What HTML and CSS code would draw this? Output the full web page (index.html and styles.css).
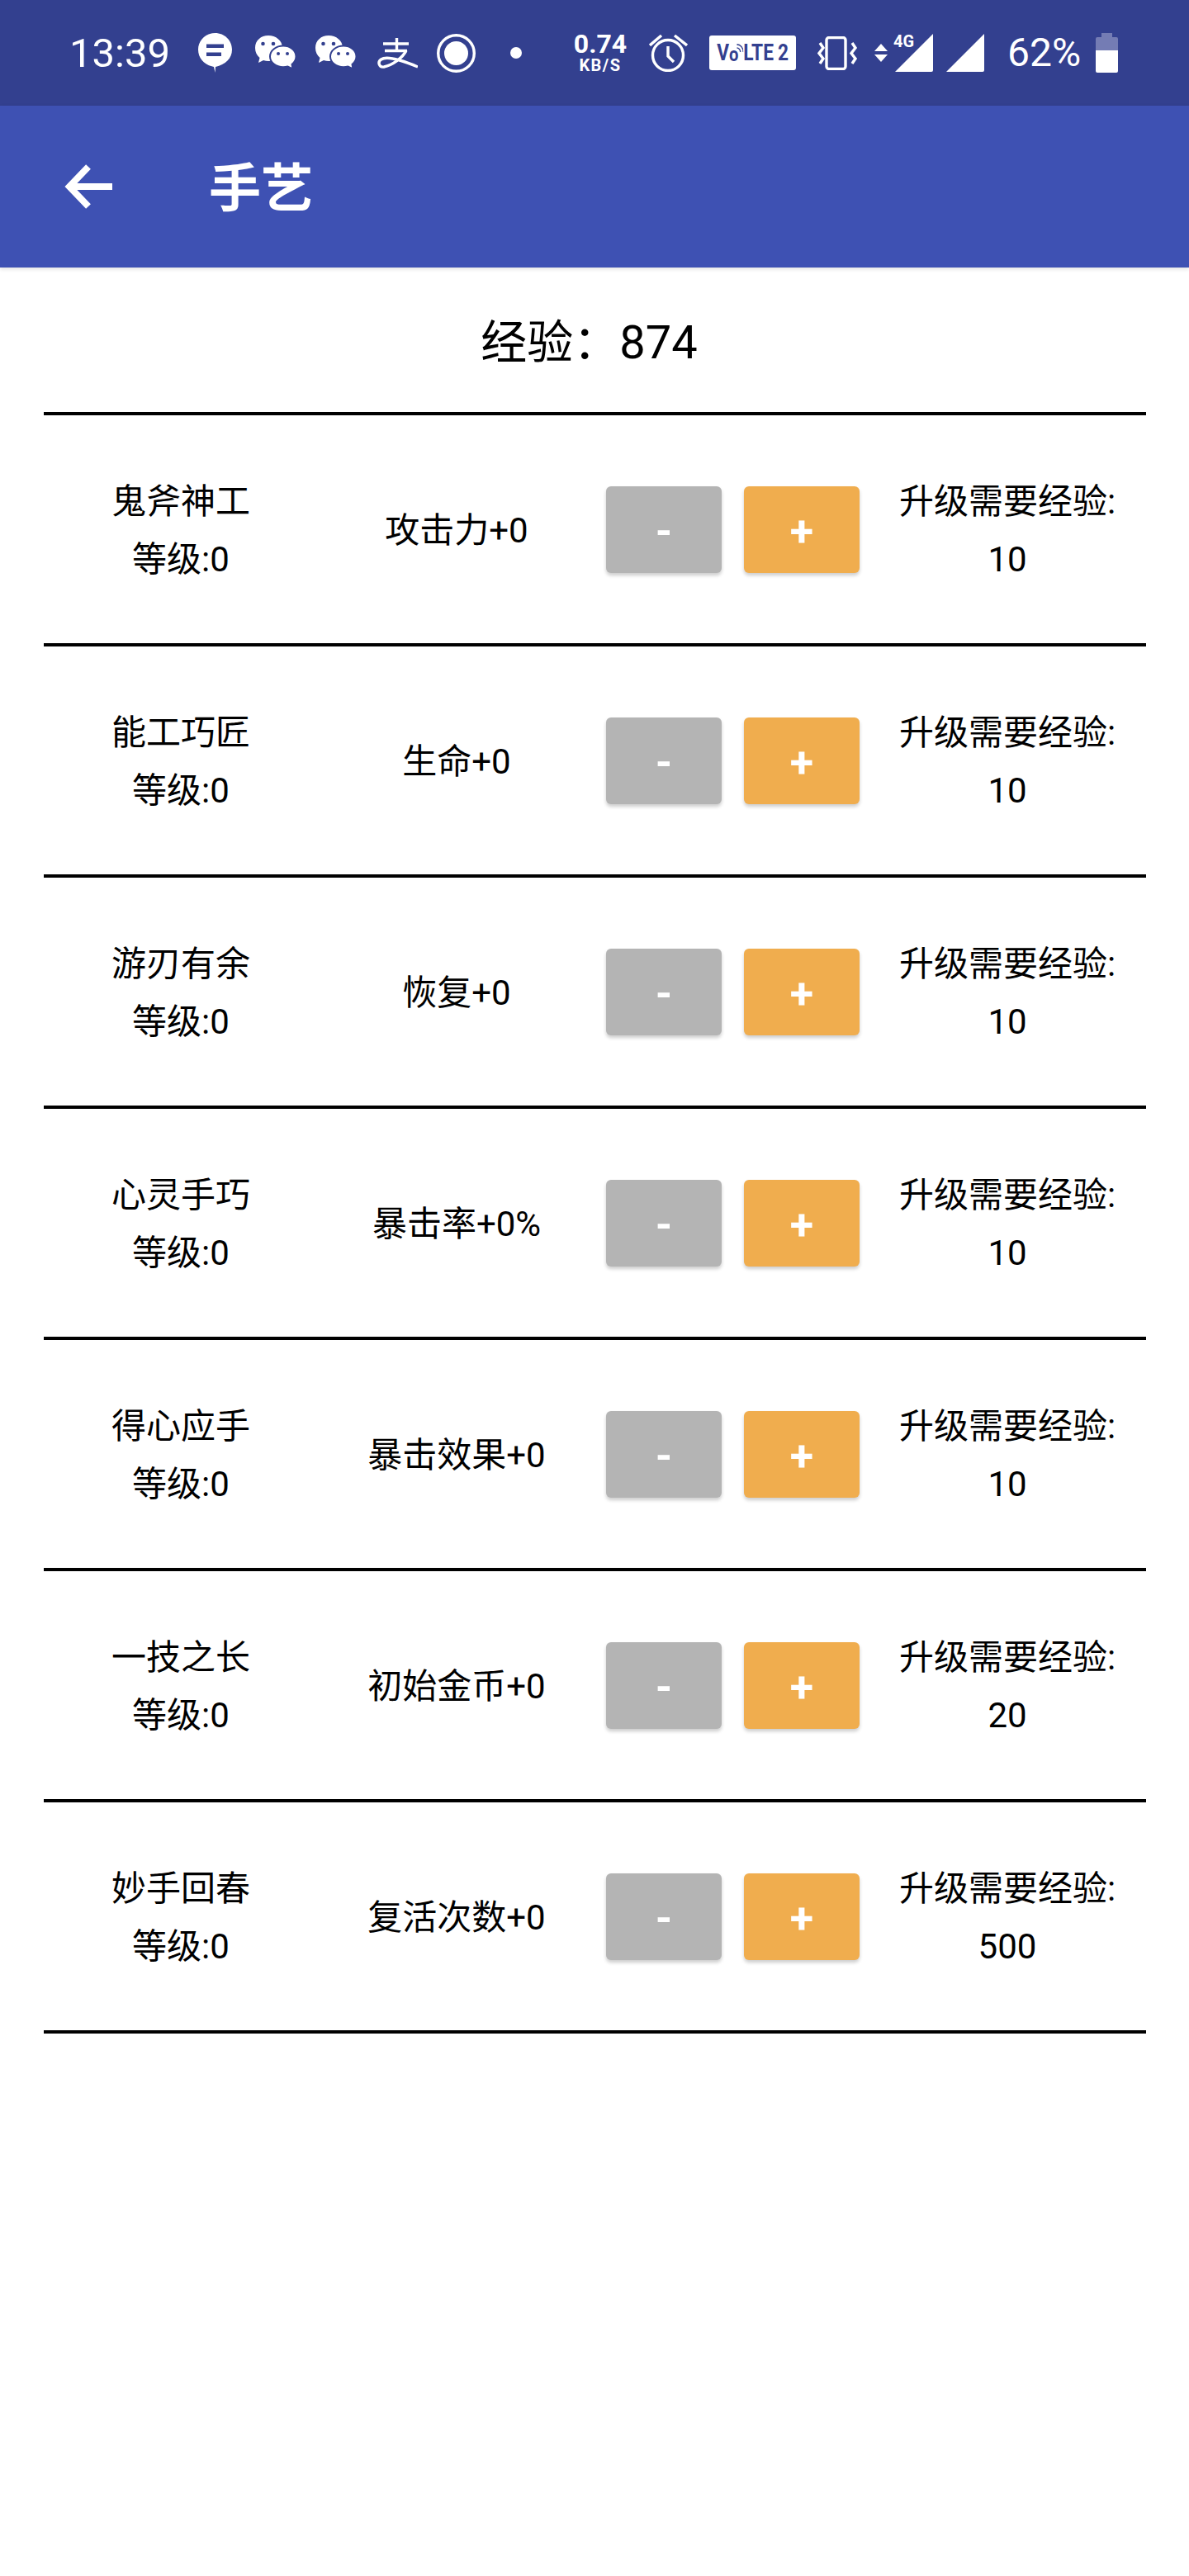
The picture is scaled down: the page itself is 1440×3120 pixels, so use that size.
FILE: index.html
```html
<!DOCTYPE html>
<html lang="zh-CN">
<head>
<meta charset="utf-8">
<title>手艺</title>
<link rel="stylesheet" href="styles.css">
</head>
<body>
<svg class="defs" width="0" height="0" aria-hidden="true">
  <symbol id="wechat" viewBox="0 0 49 42">
    <path class="fill-w" d="M16 0C25 0 33 6 33 15C33 24 25 31 16 31C14 31 12 30.600 10 30L4 33L5.500 27C2 24 0 20 0 15C0 6 7 0 16 0Z"/>
    <circle class="fill-b" cx="9.500" cy="10" r="2.300"/>
    <circle class="fill-b" cx="22" cy="10" r="2.300"/>
    <path class="bubble" d="M34 12.500C42.500 12.500 49.500 18 49.500 25.500C49.500 29.500 47.500 32.500 44.500 35L45.500 40.500L39.500 37.500C37.800 38 36 38.300 34 38.300C25.500 38.300 18 32.800 18 25.500C18 18 25.500 12.500 34 12.500Z"/>
    <circle class="fill-b" cx="28" cy="22" r="2"/>
    <circle class="fill-b" cx="39" cy="22" r="2"/>
  </symbol>
</svg>

<header class="status">
  <span class="clock">13:39</span>
  <svg class="ic msg" viewBox="0 0 41 48"><path class="fill-w" d="M20.500 0C32 0 41 9 41 20C41 31 33 38 21 41L20.500 48L19 41C8 39 0 31 0 20C0 9 9 0 20.500 0Z"/><rect class="fill-b" x="10" y="13.500" width="21" height="4.500"/><rect class="fill-b" x="10" y="23.500" width="18" height="4.500"/></svg>
  <svg class="ic wx wx1"><use href="#wechat"/></svg>
  <svg class="ic wx wx2"><use href="#wechat"/></svg>
  <svg class="ic ali" viewBox="0 0 49 37"><path class="ln" d="M7 7H38M23.500 0V15M9 15.500H36"/><path class="ln" d="M35 15C31 24 18 33 8 35C2 36 0 29 4.500 26C11 21.500 30 27 49 35"/></svg>
  <svg class="ic rec" viewBox="0 0 47 47"><circle class="ln" cx="23.500" cy="23.500" r="21.800"/><circle class="fill-w" cx="23.500" cy="23.500" r="14.500"/></svg>
  <span class="dot"></span>
  <span class="speed"><b class="speed-v">0.74</b><b class="speed-u">KB/S</b></span>
  <svg class="ic alarm" viewBox="0 0 47 45"><circle class="ln" cx="23" cy="25" r="18.500"/><path class="ln" d="M23 14V26L30 33M1 13L15 1M31 1L46 13"/></svg>
  <span class="volte"><span class="volte-in">V<span class="volte-o">o</span><svg class="wifi" viewBox="0 0 12 12"><path d="M1 6A6 6 0 0 1 7 12M1 1A11 11 0 0 1 12 12"/></svg>LTE<span class="volte-2">2</span></span></span>
  <svg class="ic vib" viewBox="0 0 50 41"><rect class="ln" x="11" y="1.500" width="23" height="38" rx="3"/><path class="ln" d="M3 8L7 14L2 20.500L7 27L3 33M42 8L46 14L41 20.500L46 27L42 33"/></svg>
  <svg class="ic arrows" viewBox="0 0 16 22"><path class="fill-w" d="M8 0L16 9H0ZM0 13H16L8 22Z"/></svg>
  <span class="sig-wrap"><svg class="ic sig" viewBox="0 0 46 46"><path class="fill-w" d="M46 0V44Q46 46 44 46H0Z"/></svg><b class="net">4G</b></span>
  <svg class="ic sig sig2" viewBox="0 0 46 46"><path class="fill-w" d="M46 0V44Q46 46 44 46H0Z"/></svg>
  <span class="pct">62%</span>
  <svg class="ic bat" viewBox="0 0 27 48"><path class="fill-d" d="M7 0H20V5H25Q27 5 27 7V21H0V7Q0 5 2 5H7Z"/><path class="fill-w" d="M0 21H27V46Q27 48 25 48H2Q0 48 0 46Z"/></svg>
</header>

<div class="appbar">
  <svg class="back" viewBox="0 0 58 54"><path d="M4 27H58M29 3L6 27L29 51"/></svg>
  <h1 class="title">手艺</h1>
</div>

<main class="content">
  <div class="exp">经验：874</div>

  <section class="row">
    <div class="name">鬼斧神工<br>等级:0</div>
    <div class="effect">攻击力+0</div>
    <button class="btn minus">-</button>
    <button class="btn plus">+</button>
    <div class="need">升级需要经验:<br>10</div>
  </section>
  <section class="row">
    <div class="name">能工巧匠<br>等级:0</div>
    <div class="effect">生命+0</div>
    <button class="btn minus">-</button>
    <button class="btn plus">+</button>
    <div class="need">升级需要经验:<br>10</div>
  </section>
  <section class="row">
    <div class="name">游刃有余<br>等级:0</div>
    <div class="effect">恢复+0</div>
    <button class="btn minus">-</button>
    <button class="btn plus">+</button>
    <div class="need">升级需要经验:<br>10</div>
  </section>
  <section class="row">
    <div class="name">心灵手巧<br>等级:0</div>
    <div class="effect">暴击率+0%</div>
    <button class="btn minus">-</button>
    <button class="btn plus">+</button>
    <div class="need">升级需要经验:<br>10</div>
  </section>
  <section class="row">
    <div class="name">得心应手<br>等级:0</div>
    <div class="effect">暴击效果+0</div>
    <button class="btn minus">-</button>
    <button class="btn plus">+</button>
    <div class="need">升级需要经验:<br>10</div>
  </section>
  <section class="row">
    <div class="name">一技之长<br>等级:0</div>
    <div class="effect">初始金币+0</div>
    <button class="btn minus">-</button>
    <button class="btn plus">+</button>
    <div class="need">升级需要经验:<br>20</div>
  </section>
  <section class="row">
    <div class="name">妙手回春<br>等级:0</div>
    <div class="effect">复活次数+0</div>
    <button class="btn minus">-</button>
    <button class="btn plus">+</button>
    <div class="need">升级需要经验:<br>500</div>
  </section>
</main>
</body>
</html>
```

FILE: styles.css
```css
* { box-sizing: border-box; }
html, body { margin: 0; padding: 0; background: #fff; }
body {
  width: 1440px;
  min-height: 3120px;
  font-family: Roboto, "Noto Sans CJK SC", sans-serif;
  color: #000;
}
.defs { position: absolute; }

.fill-w { fill: #fff; }
.fill-b { fill: #33408f; }
.fill-d { fill: #747cb4; }
.ln { fill: none; stroke: #fff; stroke-width: 3.4; }
.bubble { fill: #fff; stroke: #33408f; stroke-width: 2; }

.status {
  height: 128px;
  background: #33408f;
  display: flex;
  align-items: center;
  color: #fff;
  padding-left: 84px;
}
.ic { display: block; flex: none; }
.clock { width: 122px; margin-right: 34px; font-size: 49px; font-weight: 400; line-height: 1; flex: none; white-space: nowrap; }
.msg { width: 41px; height: 48px; margin-right: 28px; }
.wx { width: 49px; height: 42px; }
.wx1 { margin-right: 24px; }
.wx2 { margin-right: 26px; }
.ali { width: 49px; height: 37px; margin-right: 23px; }
.rec { width: 47px; height: 47px; margin-right: 42px; }
.dot { width: 14px; height: 14px; border-radius: 50%; background: #fff; margin-right: 63px; flex: none; }
.speed { width: 64px; margin-right: 27px; padding-bottom: 3px; display: flex; flex-direction: column; align-items: center; flex: none; }
.speed-v { font-size: 32px; line-height: 32px; font-weight: 700; }
.speed-u { font-size: 20px; line-height: 20px; font-weight: 700; letter-spacing: 1.5px; }
.alarm { width: 47px; height: 45px; margin-right: 26px; }
.volte {
  width: 105px;
  height: 42px;
  margin-right: 26px;
  background: #fff;
  border-radius: 3px;
  color: #33408f;
  display: flex;
  align-items: center;
  justify-content: center;
  flex: none;
}
.volte-in {
  display: flex;
  align-items: center;
  flex: none;
  font-size: 27px;
  font-weight: 700;
  line-height: 1;
  transform: scaleX(.84);
}
.volte-o { font-size: 24px; margin-top: 3px; }
.wifi { width: 10px; height: 10px; margin: -12px 0 0 -3px; fill: none; stroke: #33408f; stroke-width: 2; flex: none; }
.volte-2 { margin-left: 6px; }
.vib { width: 50px; height: 41px; margin-right: 19px; }
.arrows { width: 16px; height: 22px; margin-right: 9px; }
.sig-wrap { position: relative; width: 46px; height: 46px; margin-right: 16px; flex: none; }
.sig { width: 46px; height: 46px; }
.net { position: absolute; left: -2px; top: 0; font-size: 20px; line-height: 18px; font-weight: 700; }
.sig2 { margin-right: 28px; }
.pct { width: 90px; margin-right: 17px; font-size: 48px; font-weight: 400; line-height: 1; flex: none; white-space: nowrap; }
.bat { width: 27px; height: 48px; }

.appbar {
  height: 196px;
  background: #3e51b3;
  display: flex;
  align-items: center;
  box-shadow: 0 2px 5px rgba(0, 0, 0, .12);
  position: relative;
  color: #fff;
  padding-left: 78px;
}
.back { width: 58px; height: 54px; fill: none; stroke: #fff; stroke-width: 8; margin-right: 117px; flex: none; }
.title { margin: 0; padding-top: 4px; font-size: 63px; font-weight: 700; line-height: 1; }

.content { padding: 0 52px 0 53px; }
.exp {
  height: 179px;
  border-bottom: 4px solid #000;
  display: flex;
  align-items: center;
  justify-content: center;
  font-size: 56px;
  padding-bottom: 4px;
  padding-right: 14px;
}
.row {
  height: 280px;
  border-bottom: 4px solid #000;
  display: flex;
  align-items: center;
  font-size: 42px;
  line-height: 70px;
  text-align: center;
}
.name { width: 332px; padding-top: 4px; flex: none; }
.effect { width: 336px; padding-top: 4px; flex: none; margin-right: 13px; }
.need { width: 332px; padding-top: 4px; flex: none; margin-left: 13px; }
.btn {
  width: 140px;
  height: 105px;
  border: 0;
  border-radius: 6px;
  padding: 6px 0 0;
  color: #fff;
  font-family: Roboto, sans-serif;
  font-size: 52px;
  font-weight: 700;
  line-height: 1;
  box-shadow: 0 3px 4px rgba(0, 0, 0, .2);
  flex: none;
}
.minus { background: #b4b4b4; margin-right: 27px; }
.plus { background: #f0ad4e; }
```
